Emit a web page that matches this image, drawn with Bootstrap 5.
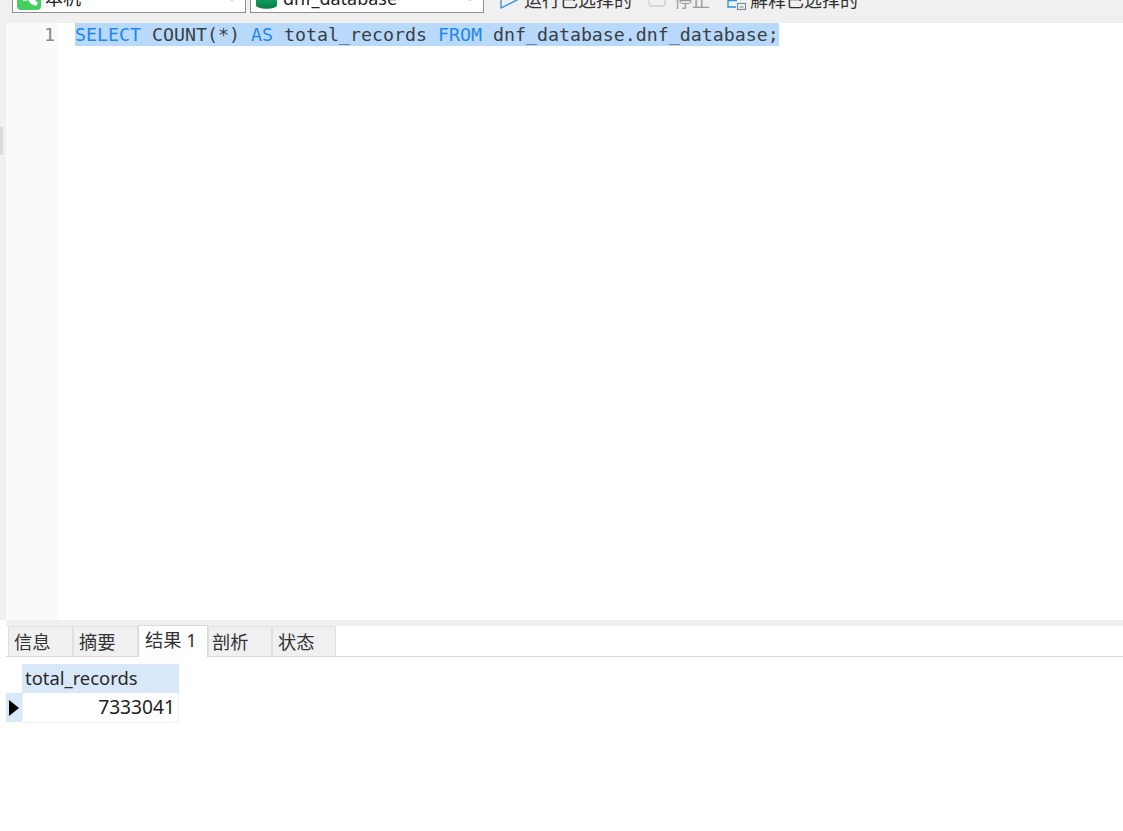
<!DOCTYPE html>
<html lang="zh">
<head>
<meta charset="utf-8">
<title>Query</title>
<link href="https://cdn.jsdelivr.net/npm/bootstrap@5.3.0/dist/css/bootstrap.min.css" rel="stylesheet">
<style>
html,body{height:831px;overflow:hidden;background:#fff}
body{font-family:"Noto Sans","Noto Sans CJK SC",sans-serif;color:#222}
.shell{width:1123px;height:831px;overflow:hidden}
.toolbar{height:23px;background:#f0f0f0;overflow:hidden;font-size:18px;padding-left:12px}
.toolbar-row{margin-top:-14px;height:27px}
.combo{width:234px;height:27px;background:#fff;border:1px solid #8f8f8f;margin-right:4px;line-height:22px;padding-left:3px;white-space:nowrap;overflow:hidden}
.combo-icon{margin-top:-1px;flex:none}
.combo-label{margin-left:4px;flex:1}
.combo-arrow{margin:11px 8px 0 0;flex:none}
.tool{white-space:nowrap;line-height:28px;color:#333}
.tool.off{color:#9a9a9a}
.tool-run{margin-left:12px;width:148px}
.tool-run svg{margin:5px 6px 0 0}
.tool-stop{width:79px}
.tool-stop svg{margin:3px 8px 0 0}
.tool-explain svg{margin:4px 3px 0 0}
.workspace{height:597px}
.side{width:6px;background:#f0f0f0;padding-top:104px}
.grip{width:3px;height:28px;background:#dcdcdc}
.gutter{width:52px;background:#fafafa;color:#8a8a8a;text-align:right;padding-right:3px}
.sql{font-family:"DejaVu Sans Mono","Liberation Mono",monospace;font-size:18.28px;line-height:23px;white-space:pre}
.code{padding-left:17px;color:#3a3f45}
.picked{background:#b9d9fb;display:inline-block;height:23px}
.kw{color:#1f87f0}
.split{height:6px;background:#f0f0f0;margin-left:6px}
.lower{height:205px;padding-left:6px}
.tabbar{height:31px;border-bottom:1px solid #d9d9d9;padding-left:2px;font-size:18.3px}
.tabitem{height:30px;width:65px;background:#f0f0f0;border:1px solid #e0e0e0;border-bottom:0;padding-left:5px;line-height:30px;color:#333;white-space:nowrap}
.tabitem.narrow{width:64px}
.tabitem.tight{padding-left:3px}
.tabitem.on{background:#fff;height:32px;margin-top:-1px;width:70px;border-color:#d9d9d9;line-height:28px;position:relative;z-index:1;padding-left:6px}
.datagrid{margin-top:7px;width:173px;font-size:18.4px;line-height:28px}
.cornercell{width:16px;height:29px}
.headcell{height:29px;background:#d9e8f8;padding-left:3px;flex:1;color:#2a2a2a}
.marker{width:16px;height:29px;background:#d9e8f8}
.valcell{height:30px;border:1px solid #eef1f4;border-top:0;flex:1;text-align:right;padding-right:3px;color:#222;font-size:19.2px}
</style>
</head>
<body>
<div class="shell d-flex flex-column">
  <div class="toolbar">
    <div class="toolbar-row d-flex">
      <div class="combo d-flex align-items-start">
        <svg class="combo-icon" width="25" height="24" viewBox="0 0 25 24"><rect x="1" y="0" width="24" height="24" rx="4" fill="#45cf5e"/><path d="M4 10c2-3 5-3 7-1l2 3 5 1 4 4-2 3-5-2-3-4-3 1c-2 0-4-2-5-5z" fill="#fff"/></svg>
        <span class="combo-label">本机</span>
        <svg class="combo-arrow" width="10" height="4" viewBox="0 0 10 4"><path d="M1 0l4 3 4-3" fill="none" stroke="#d5d5d5"/></svg>
      </div>
      <div class="combo d-flex align-items-start">
        <svg class="combo-icon" width="25" height="24" viewBox="0 0 25 24"><defs><linearGradient id="dbfill" x1="0" y1="0" x2="0" y2="1"><stop offset="0.55" stop-color="#0e9f5c"/><stop offset="1" stop-color="#0a7a46"/></linearGradient></defs><path d="M2 2h21v17c0 5-21 5-21 0z" fill="url(#dbfill)"/></svg>
        <span class="combo-label">dnf_database</span>
        <svg class="combo-arrow" width="10" height="4" viewBox="0 0 10 4"><path d="M1 0l4 3 4-3" fill="none" stroke="#d5d5d5"/></svg>
      </div>
      <div class="tool tool-run d-flex align-items-start">
        <svg width="18" height="18" viewBox="0 0 18 18"><path d="M1 1v16l16-8z" fill="none" stroke="#2b8fe0" stroke-width="1.3"/></svg>运行已选择的
      </div>
      <div class="tool tool-stop off d-flex align-items-start">
        <svg width="18" height="18" viewBox="0 0 18 18"><rect x="1" y="1" width="16" height="16" rx="2.5" fill="none" stroke="#cfcfcf" stroke-width="1.3"/></svg>停止
      </div>
      <div class="tool tool-explain d-flex align-items-start">
        <svg width="20" height="20" viewBox="0 0 20 20"><path d="M10 10.5H1V17h8" fill="none" stroke="#2b8fe0" stroke-width="1.3"/><rect x="10.5" y="13.5" width="8" height="6" fill="none" stroke="#6f8a99" stroke-width="1.1"/><path d="M12.5 17h4" stroke="#6f8a99" stroke-width="1"/></svg>解释已选择的
      </div>
    </div>
  </div>
  <div class="workspace d-flex">
    <div class="side"><div class="grip"></div></div>
    <div class="gutter sql">1</div>
    <div class="code sql flex-grow-1"><span class="picked"><span class="kw">SELECT</span> COUNT(*) <span class="kw">AS</span> total_records <span class="kw">FROM</span> dnf_database.dnf_database;</span></div>
  </div>
  <div class="split"></div>
  <div class="lower">
    <div class="tabbar d-flex">
      <div class="tabitem">信息</div>
      <div class="tabitem">摘要</div>
      <div class="tabitem on">结果 1</div>
      <div class="tabitem narrow tight">剖析</div>
      <div class="tabitem narrow">状态</div>
    </div>
    <div class="datagrid">
      <div class="d-flex"><div class="cornercell"></div><div class="headcell">total_records</div></div>
      <div class="d-flex">
        <div class="marker d-flex align-items-center justify-content-center"><svg width="10" height="16" viewBox="0 0 10 16"><path d="M0 0l10 8-10 8z" fill="#000"/></svg></div>
        <div class="valcell">7333041</div>
      </div>
    </div>
  </div>
</div>
<script src="https://cdn.jsdelivr.net/npm/bootstrap@5.3.0/dist/js/bootstrap.bundle.min.js"></script>
</body>
</html>
